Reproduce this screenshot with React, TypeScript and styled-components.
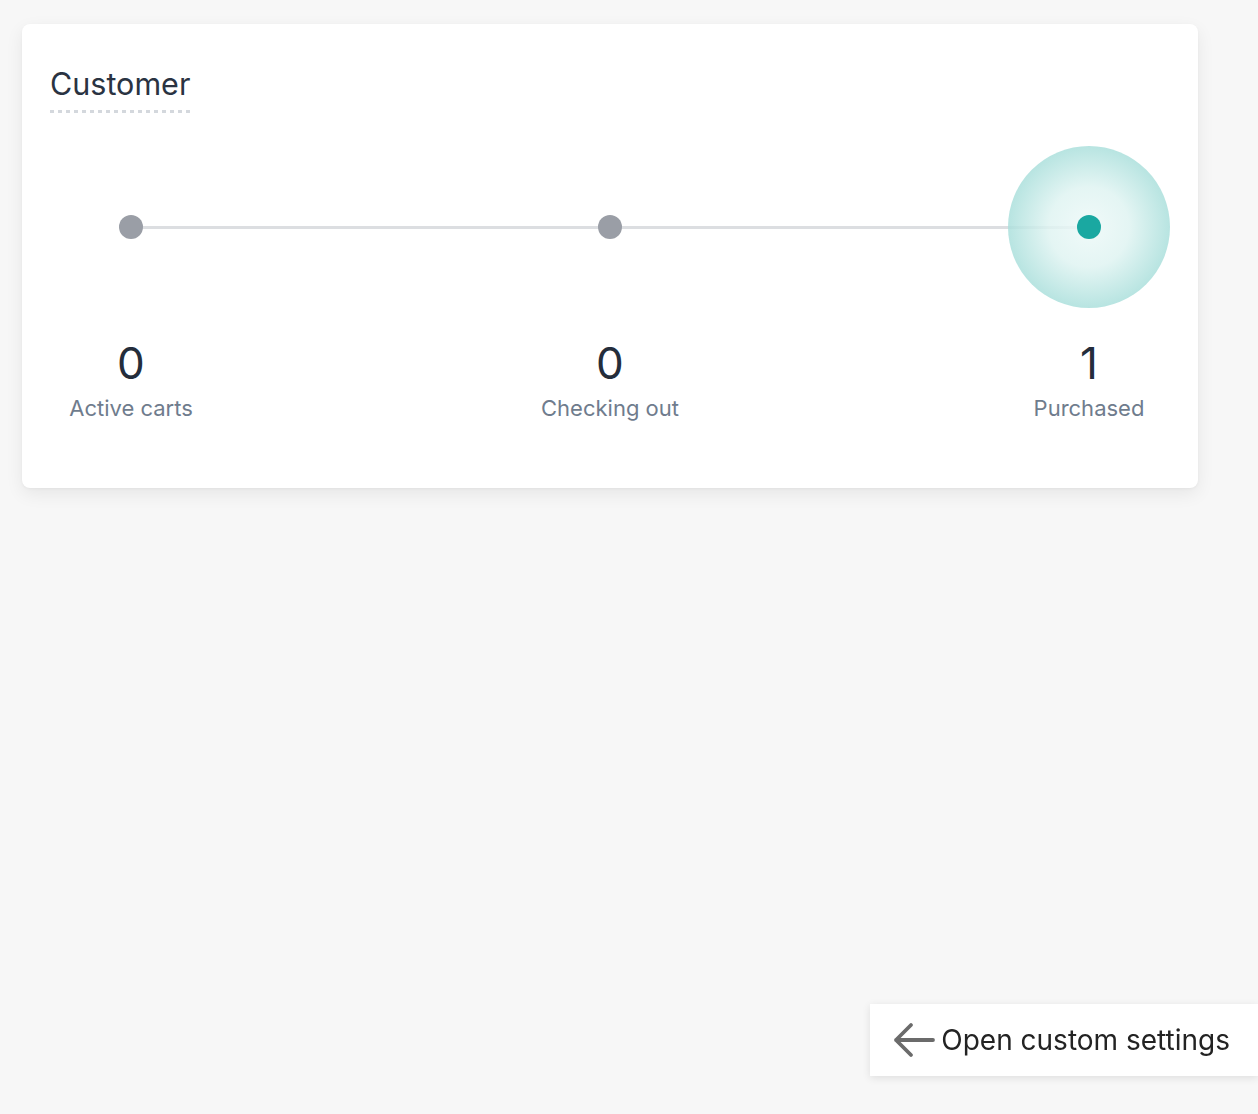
import styled, { createGlobalStyle } from "styled-components";

const GlobalStyle = createGlobalStyle`
  html, body {
    margin: 0;
    padding: 0;
    background: #f7f7f7;
    font-family: Inter, "Noto Sans", sans-serif;
  }
  body {
    min-height: 1114px;
  }
`;

const Page = styled.div`
  padding: 24px 60px 0 22px;
`;

const Card = styled.section`
  background: #fff;
  border-radius: 8px;
  box-shadow: 0 6px 18px rgba(0, 0, 0, 0.07), 0 1px 3px rgba(0, 0, 0, 0.04);
  padding: 42px 28px 66px;
`;

const Title = styled.h2`
  display: inline-block;
  margin: 0;
  font-size: 30.5px;
  font-weight: 400;
  line-height: 36px;
  color: #2a3342;
  padding-bottom: 11px;
  background-image: repeating-linear-gradient(
    to right,
    #d4d8dd 0 4px,
    transparent 4px 8px
  );
  background-size: 100% 3px;
  background-repeat: no-repeat;
  background-position: left bottom;
`;

const Track = styled.div`
  position: relative;
  display: flex;
  justify-content: space-between;
  margin-top: 33px;
`;

const Line = styled.div`
  position: absolute;
  left: 81px;
  right: 81px;
  top: 80px;
  height: 3px;
  background: #dcdee1;
`;

const Step = styled.div`
  position: relative;
  width: 162px;
  display: flex;
  flex-direction: column;
  align-items: center;
`;

const Stage = styled.div<{ $active?: boolean }>`
  width: 162px;
  height: 162px;
  border-radius: 50%;
  display: flex;
  align-items: center;
  justify-content: center;
  background: ${(p) =>
    p.$active
      ? "radial-gradient(circle, rgba(238,249,248,0.85) 0%, rgba(222,243,241,0.82) 35%, rgba(128,207,202,0.85) 100%)"
      : "transparent"};
`;

const Dot = styled.span<{ $active?: boolean }>`
  width: 24px;
  height: 24px;
  border-radius: 50%;
  background: ${(p) => (p.$active ? "#1aa8a1" : "#9a9ea6")};
`;

const Count = styled.div`
  margin-top: 29px;
  font-size: 44px;
  line-height: 52px;
  color: #242d3b;
`;

const Label = styled.div`
  margin-top: 5px;
  font-size: 22px;
  line-height: 28px;
  color: #6f7c8d;
  white-space: nowrap;
`;

const SettingsButton = styled.button`
  position: fixed;
  right: 0;
  bottom: 38px;
  height: 72px;
  padding: 0 28px 0 23px;
  display: flex;
  align-items: center;
  gap: 6px;
  border: none;
  background: #fff;
  box-shadow: 0 2px 8px rgba(0, 0, 0, 0.1);
  font-family: Inter, "Noto Sans", sans-serif;
  font-size: 28px;
  color: #232323;
  cursor: pointer;
`;

const steps = [
  { count: 0, label: "Active carts" },
  { count: 0, label: "Checking out" },
  { count: 1, label: "Purchased", active: true },
];

export default function App() {
  return (
    <>
      <GlobalStyle />
      <Page>
        <Card>
          <Title>Customer</Title>
          <Track>
            <Line />
            {steps.map((s) => (
              <Step key={s.label}>
                <Stage $active={s.active}>
                  <Dot $active={s.active} />
                </Stage>
                <Count>{s.count}</Count>
                <Label>{s.label}</Label>
              </Step>
            ))}
          </Track>
        </Card>
      </Page>
      <SettingsButton>
        <svg width="42" height="36" viewBox="0 0 42 36" fill="none">
          <path
            d="M40 18H3M18 3L3 18l15 15"
            stroke="#6b6b6b"
            strokeWidth="3.8"
            strokeLinecap="round"
            strokeLinejoin="round"
          />
        </svg>
        Open custom settings
      </SettingsButton>
    </>
  );
}
